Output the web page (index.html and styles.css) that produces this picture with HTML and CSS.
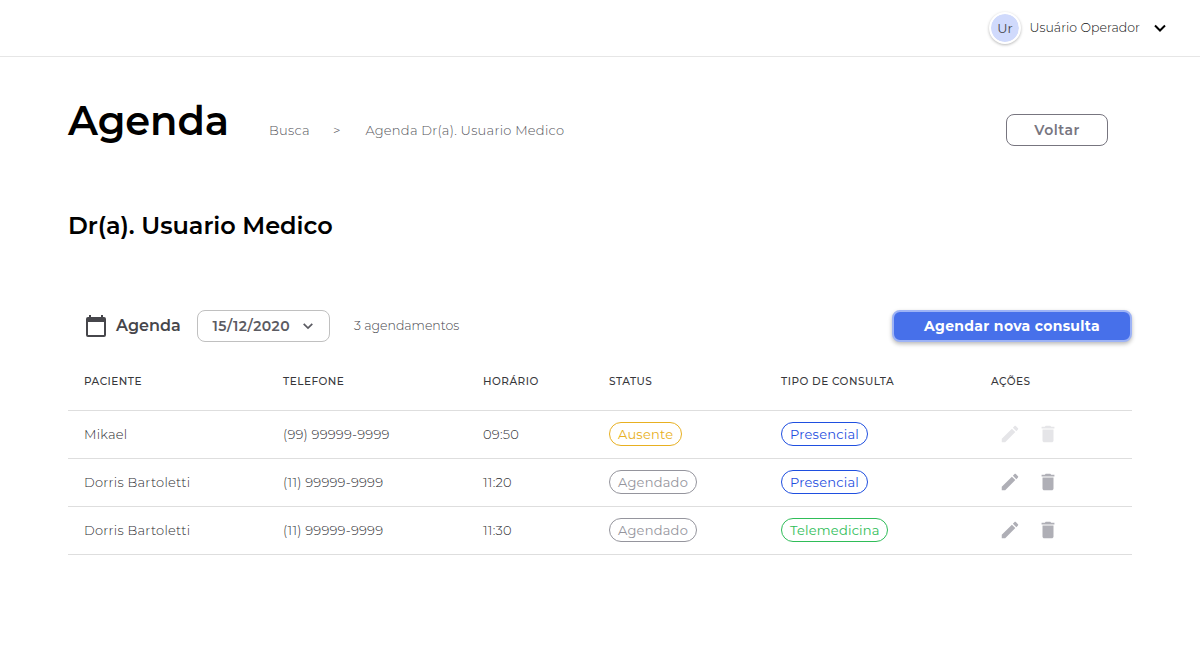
FILE: index.html
```html
<!DOCTYPE html>
<html lang="pt-BR">
<head>
<meta charset="utf-8">
<title>Agenda</title>
<link rel="stylesheet" href="styles.css">
</head>
<body>
<svg class="defs" width="0" height="0">
  <symbol id="pencil" viewBox="0 0 24 24"><path d="M3 17.25V21h3.75L17.81 9.94l-3.75-3.75L3 17.25zM20.71 7.04c.39-.39.39-1.02 0-1.41l-2.34-2.34c-.39-.39-1.02-.39-1.41 0l-1.83 1.83 3.75 3.75 1.83-1.83z"/></symbol>
  <symbol id="trash" viewBox="0 0 24 24"><path d="M6 19c0 1.100.9 2 2 2h8c1.100 0 2-.9 2-2V7H6v12zM19 4h-3.500l-1-1h-5l-1 1H5v2h14V4z"/></symbol>
  <symbol id="chevron" viewBox="0 0 14 14"><path d="M2 4.500L7 9.500L12 4.500" fill="none" stroke="currentColor" stroke-width="2"/></symbol>
</svg>
<header class="topbar">
  <div class="avatar">Ur</div>
  <span class="user-name">Usuário Operador</span>
  <svg class="user-chevron"><use href="#chevron"/></svg>
</header>
<main class="page">
  <div class="heading">
    <h1 class="title">Agenda</h1>
    <nav class="crumbs"><span class="crumb-search">Busca</span><span class="crumb-sep">&gt;</span><span>Agenda Dr(a). Usuario Medico</span></nav>
    <button class="back">Voltar</button>
  </div>
  <h2 class="doctor">Dr(a). Usuario Medico</h2>
  <section>
    <div class="toolbar">
      <svg class="calendar" viewBox="0 0 20 22"><path d="M3 0h2v2h10V0h2v2h1a2 2 0 0 1 2 2v16a2 2 0 0 1-2 2H2a2 2 0 0 1-2-2V4a2 2 0 0 1 2-2h1zM2 7v13h16V7z"/></svg>
      <h3 class="section-title">Agenda</h3>
      <button class="date"><span>15/12/2020</span><svg class="date-chevron"><use href="#chevron"/></svg></button>
      <span class="count">3 agendamentos</span>
      <button class="schedule">Agendar nova consulta</button>
    </div>
    <div class="row head">
      <span>PACIENTE</span><span>TELEFONE</span><span>HORÁRIO</span><span>STATUS</span><span>TIPO DE CONSULTA</span><span>AÇÕES</span>
    </div>
    <div class="row">
      <span>Mikael</span><span>(99) 99999-9999</span><span>09:50</span>
      <span><span class="chip absent">Ausente</span></span><span><span class="chip onsite">Presencial</span></span>
      <span class="actions disabled"><svg><use href="#pencil"/></svg><svg><use href="#trash"/></svg></span>
    </div>
    <div class="row">
      <span>Dorris Bartoletti</span><span>(11) 99999-9999</span><span>11:20</span>
      <span><span class="chip booked">Agendado</span></span><span><span class="chip onsite">Presencial</span></span>
      <span class="actions"><svg><use href="#pencil"/></svg><svg><use href="#trash"/></svg></span>
    </div>
    <div class="row">
      <span>Dorris Bartoletti</span><span>(11) 99999-9999</span><span>11:30</span>
      <span><span class="chip booked">Agendado</span></span><span><span class="chip remote">Telemedicina</span></span>
      <span class="actions"><svg><use href="#pencil"/></svg><svg><use href="#trash"/></svg></span>
    </div>
  </section>
</main>
</body>
</html>
```
FILE: styles.css
```css
* { box-sizing: border-box; }
body { margin: 0; height: 661px; overflow: hidden; background: #fff; color: #2c2c31; font: 300 13px/20px Montserrat, Inter, sans-serif; letter-spacing: .25px; }
h1, h2, h3 { margin: 0; }
button { font: inherit; background: #fff; padding: 0; white-space: nowrap; }
svg { display: block; flex: none; }
.defs { position: absolute; }

.topbar { height: 57px; border-bottom: 1px solid #e6e6e6; display: flex; align-items: center; justify-content: flex-end; padding-right: 33px; }
.avatar { width: 32px; height: 32px; border: 2px solid #fff; border-radius: 50%; background: #d0dafc; background-clip: padding-box; box-shadow: 0 1px 3px rgba(0, 0, 0, .28); display: flex; align-items: center; justify-content: center; letter-spacing: 0; font-weight: 400; color: #46464b; margin-right: 8.5px; }
.user-name { width: 110.5px; font-size: 12.5px; letter-spacing: .04px; margin-right: 13px; padding-bottom: 1px; white-space: nowrap; color: #111; }
.user-chevron { width: 14px; height: 14px; color: #000; }

.page { width: 1064px; margin-left: 68px; }
.heading { display: flex; height: 132px; padding-top: 40px; align-items: flex-start; }
.title { width: 200px; font-size: 40px; line-height: 48px; font-weight: 600; letter-spacing: -.1px; color: #000; }
.crumbs { display: flex; padding: 23px 0 0 1px; color: #55555b; white-space: nowrap; }
.crumb-search { width: 64px; }
.crumb-sep { width: 32.4px; }
.back { width: 102px; height: 32px; margin: 17px 24px 0 auto; border: 1px solid #77757f; border-radius: 8px; color: #77757f; font-size: 14px; font-weight: 600; letter-spacing: .5px; }
.doctor { height: 121px; padding-top: 21px; font-size: 24px; line-height: 32px; font-weight: 600; letter-spacing: -.02px; color: #000; }

.toolbar { display: flex; align-items: center; height: 32px; padding-left: 18px; }
.calendar { width: 20px; height: 22px; fill: #46464b; margin-right: 10px; }
.section-title { width: 81px; font-size: 16px; font-weight: 600; letter-spacing: 0; color: #46464b; }
.date { display: flex; align-items: center; width: 133px; height: 32px; padding-left: 14.5px; border: 1px solid #c0c0c0; border-radius: 8px; font-size: 14px; font-weight: 600; letter-spacing: .45px; color: #5b5b62; }
.date span { width: 89.5px; text-align: left; }
.date-chevron { width: 12px; height: 12px; }
.count { margin-left: 24px; font-size: 12.5px; letter-spacing: 0; color: #46464b; }
.schedule { width: 240px; height: 32px; margin-left: auto; border: 2px solid #9db3f6; border-radius: 8px; background: #4770ea; color: #fff; font-size: 14px; font-weight: 700; letter-spacing: .3px; box-shadow: 0 2px 4px rgba(0, 0, 0, .28); }

.row { display: grid; grid-template-columns: 199px 200px 126px 172px 210px 1fr; align-items: center; height: 48px; padding: 0 0 1px 16px; border-bottom: 1px solid #dedede; white-space: nowrap; }
.head { height: 69px; padding-top: 13px; font-size: 10.5px; font-weight: 500; letter-spacing: .48px; color: #37373b; }
.chip { display: flex; align-items: center; height: 24px; padding-left: 8px; border: 1px solid; border-radius: 12px; font-weight: 400; letter-spacing: .22px; }
.absent { width: 73px; color: #e8b021; }
.booked { width: 88px; color: #95959d; }
.onsite { width: 87px; color: #1f4fe0; }
.remote { width: 107px; color: #2fbd58; }
.actions { display: flex; gap: 16px; padding-left: 8px; fill: #afafb6; }
.actions svg { width: 22px; height: 22px; }
.disabled { fill: #e5e5e8; }
```
